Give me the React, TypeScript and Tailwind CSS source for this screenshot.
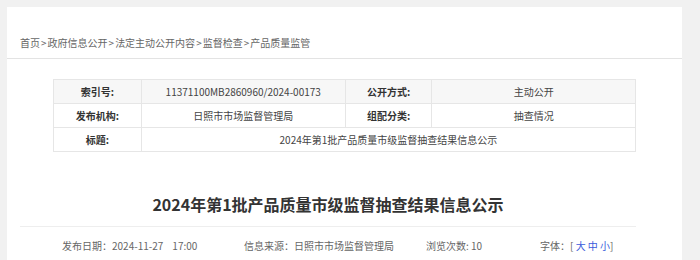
const font = "font-['Microsoft_YaHei','Noto_Sans_CJK_SC',sans-serif]";

const crumbs = ["首页", "政府信息公开", "法定主动公开内容", "监督检查", "产品质量监管"];

export default function App() {
  return (
    <div className={`min-h-[260px] w-[700px] overflow-hidden bg-[#f1f1f1] pl-[7px] pt-[7px] ${font}`}>
      <div className="h-[260px] w-[675px] bg-white">
        {/* breadcrumb */}
        <div className="flex h-[52px] items-end border-b border-[#e3e3e3] pb-[8px] pl-[13px] text-[10px] leading-[14px] text-[#666]">
          {crumbs.map((c, i) => (
            <span key={c}>
              {i > 0 && <span className="px-[1px]">&gt;</span>}
              {c}
            </span>
          ))}
        </div>

        {/* info table */}
        <div className="pl-[46px] pt-[20px]">
          <table className="w-[583px] border-collapse text-center text-[10px] text-[#444]">
            <tbody>
              <tr className="h-[24px]">
                <td className="w-[88px] border border-[#e6e6e6] bg-[#f7f7f7] font-bold text-[#333]">索引号:</td>
                <td className="w-[204px] border border-[#e6e6e6] bg-[#f7f7f7]">11371100MB2860960/2024-00173</td>
                <td className="w-[87px] border border-[#e6e6e6] bg-[#f7f7f7] font-bold text-[#333]">公开方式:</td>
                <td className="w-[204px] border border-[#e6e6e6] bg-[#f7f7f7]">主动公开</td>
              </tr>
              <tr className="h-[24px]">
                <td className="border border-[#e6e6e6] font-bold text-[#333]">发布机构:</td>
                <td className="border border-[#e6e6e6]">日照市市场监督管理局</td>
                <td className="border border-[#e6e6e6] font-bold text-[#333]">组配分类:</td>
                <td className="border border-[#e6e6e6]">抽查情况</td>
              </tr>
              <tr className="h-[24px]">
                <td className="border border-[#e6e6e6] font-bold text-[#333]">标题:</td>
                <td colSpan={3} className="border border-[#e6e6e6]">
                  2024年第1批产品质量市级监督抽查结果信息公示
                </td>
              </tr>
            </tbody>
          </table>
        </div>

        {/* article head */}
        <div className="ml-[13px] w-[616px]">
          <h1 className="mt-[40px] border-b border-[#eee] pb-[10px] text-center text-[16px] font-bold leading-[24px] text-[#333]">
            2024年第1批产品质量市级监督抽查结果信息公示
          </h1>
          <div className="flex h-[36px] items-center text-[10px] text-[#666]">
            <span className="w-[224px] shrink-0 pl-[42px]">
              发布日期：<span>2024-11-27</span>
              <span className="ml-[9px]">17:00</span>
            </span>
            <span className="w-[182px] shrink-0">信息来源：日照市市场监督管理局</span>
            <span className="w-[114px] shrink-0">浏览次数: 10</span>
            <span>
              字体：[ <span className="text-[#3b5bdb]">大 中 小</span>]
            </span>
          </div>
        </div>
      </div>
    </div>
  );
}
